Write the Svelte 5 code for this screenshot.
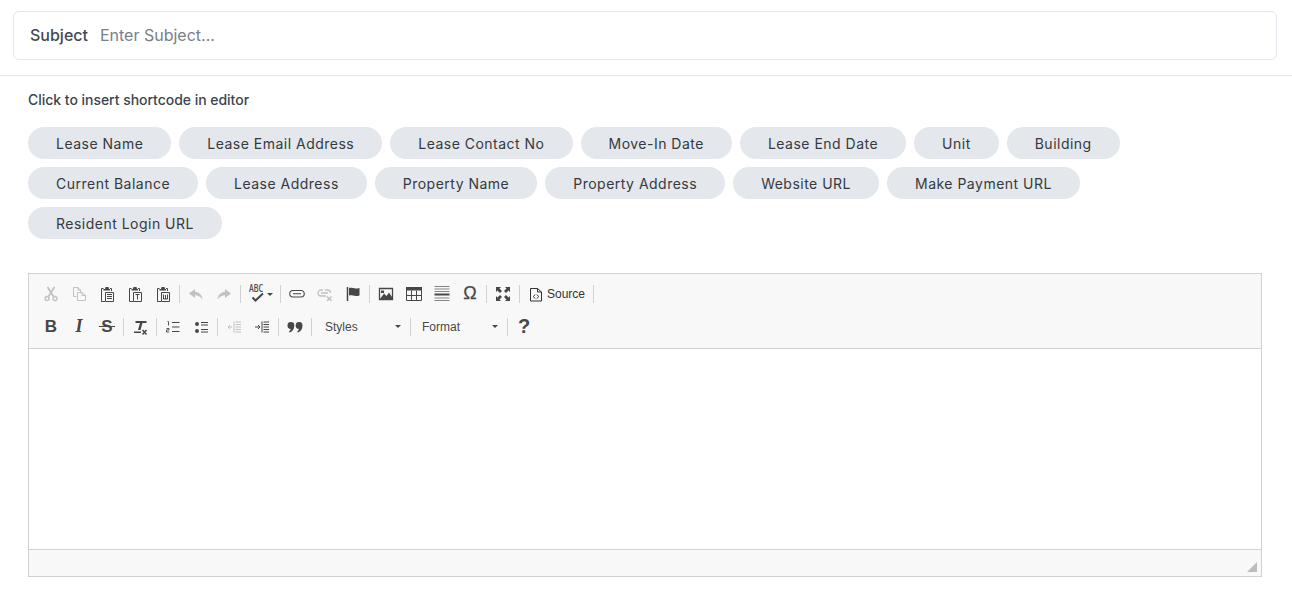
<script>
  const labels = ['Lease Name','Lease Email Address','Lease Contact No','Move-In Date','Lease End Date','Unit','Building','Current Balance','Lease Address','Property Name','Property Address','Website URL','Make Payment URL','Resident Login URL'];
  const S = (d, w = 1, o = 1) => ({ d, s: w, o });
  const F = (d) => ({ d, o: 1 });
  const clip = [S('M4.5 2.500H2.500V15.500H6'), S('M11 2.500H12.500V5'), F('M4.500 3H6L6.500 1H9.500L10 3H11V4.500H4.500Z')];
  const doc = S('M6.500 6.500H14.500V15.500H6.500Z');
  const icons = {
    cut: [S('M4.500 1 10.500 10.500M11.500 1 5.500 10.500', 1.8), S('M4 10.500a2 2 0 1 0 .1 0ZM12 10.500a2 2 0 1 0 .1 0Z', 1.5)],
    copy: [S('M5.500 10.500H2.500V1.500H7L9.500 4V6M7 1.500V4H9.500M6.500 6.500H11L14.500 9.500V14.500H6.500ZM11 6.500V9.500H14.500')],
    paste: [...clip, doc, S('M8 8.500H13M8 10.500H13M8 12.500H13')],
    pasteT: [...clip, doc, S('M8.500 8.500H12.500M10.500 8.500V13.500')],
    pasteW: [...clip, doc, S('M8.500 8.500V13H12.500V8.500M10.500 9V13')],
    undo: [F('M7 3 1 7.500 7 12V9.300C10 9.300 12 10.300 14.500 13.500 14 8.500 11 6 7 5.700Z')],
    redo: [F('M9 3 15 7.500 9 12V9.300C6 9.300 4 10.300 1.500 13.500 2 8.500 5 6 9 5.700Z')],
    link: [S('M6 4.500H4a3 3 0 0 0 0 6.500H12a3 3 0 0 0 0-6.500H5M4 7.750H12', 1.1)],
    unlink: [S('M6 4H4a3 3 0 0 0 0 6H9M4 7H11M8 4H10.500a3 3 0 0 1 3 3', 1.300), S('M10 10.500 14.500 15M14.500 10.500 10 15', 1.500)],
    flag: [S('M2.500 1V15', 1.500), F('M4 2C7 1 9 3.500 14.500 2V9.500C9 11 7 8.500 4 9.500Z')],
    image: [S('M1.500 2.500H14.500V13.500H1.500Z', 1.300), F('M2 13 6 7.500 8.500 10 11 6.500 14 11V13ZM3 4.500H6V7H3Z')],
    table: [F('M0 1H16V4.500H0Z'), S('M.5 1.500H15.500V14.500H.5ZM.5 9.500H15.500M5.500 4.500V14.500M10.500 4.500V14.500', 1)],
    hr: [S('M.5 .5H15.500M.5 3H15.500M.5 5.500H15.500M.5 12H15.500M.5 14.500H15.500', 1, .65), S('M.5 8.500H15.500', 2)],
    fit: [F('M1 1H6L4.500 2.500 7 5 5 7 2.500 4.500 1 6ZM15 1V6L13.500 4.500 11 7 9 5 11.500 2.500 10 1ZM1 15V10L2.500 11.500 5 9 7 11 4.500 13.500 6 15ZM15 15H10L11.500 13.500 9 11 11 9 13.500 11.500 15 10Z')],
    source: [S('M2.500 2.500H9.500L13.500 6V15H2.500ZM9.500 2.500V6H13.500', 1), S('M7 8.500 5.500 10.500 7 12.500M9 8.500 10.500 10.500 9 12.500', 1)],
    ol: [S('M7 3.500H14.500M7 8H14.500M7 12.500H14.500', 1.100), S('M2.500 2.500H3.500V6.500M1.500 9.500H4V11H1.500V13H4.300', .9)],
    ul: [S('M8 3.500H15M8 6H15M8 10.500H15M8 13H15', 1), F('M2 5a2 2 0 1 0 4 0a2 2 0 1 0-4 0ZM2 12a2 2 0 1 0 4 0a2 2 0 1 0-4 0Z')],
    outdent: [S('M8 2.500V13.500', 1), S('M9.500 3H15M9.500 5.500H15M9.500 8H15M9.500 10.500H15M9.500 13H15', 1), S('M2 8H6', 1), S('M4 6 2 8 4 10', 1)],
    indent: [S('M8 2.500V13.500', 1), S('M9.500 3H15M9.500 5.500H15M9.500 8H15M9.500 10.500H15M9.500 13H15', 1), S('M1 8H6', 1), S('M4 6 6 8 4 10', 1)],
    quote: [F('M.5 6.500a3.400 3.400 0 0 1 6.800 0C7.300 10 5.500 12.500 2.700 13.500L2 12.400C3 11.700 3.600 11 3.800 10A3.400 3.400 0 0 1 .5 6.500ZM8.700 6.500a3.400 3.400 0 0 1 6.800 0C15.500 10 13.700 12.500 10.900 13.500L10.200 12.400C11.200 11.700 11.800 11 12 10A3.400 3.400 0 0 1 8.700 6.500Z')],
    clear: [F('M3.500 2H14.500V4H10.500L8.500 11H6L8 4H3.500ZM2 12.500H9V14H2Z'), S('M10.500 11 14.500 15.500M14.500 11 10.500 15.500', 1.500)],
    check: [S('M3.500 10.500 6.500 13.500 14 6.500', 2)]
  };
</script>

{#snippet svg(name, off = false)}
  <svg class="ico" class:off width="16" height="16" viewBox="0 0 16 16" aria-hidden="true">
    {#each icons[name] as p}
      {#if p.s}
        <path d={p.d} fill="none" stroke="currentColor" stroke-width={p.s} opacity={p.o} />
      {:else}
        <path d={p.d} fill="currentColor" />
      {/if}
    {/each}
  </svg>
{/snippet}
{#snippet btn(name, off = false)}
  <span class="btn">{@render svg(name, off)}</span>
{/snippet}

<main class="page">
  <div class="subject-wrap">
    <div class="subject">
      <span class="subject-label">Subject</span>
      <span class="placeholder">Enter Subject...</span>
    </div>
  </div>
  <hr class="divider" />
  <section class="body">
    <p class="hint">Click to insert shortcode in editor</p>
    <div class="pills">
      {#each labels as label}
        <span class="pill">{label}</span>
      {/each}
    </div>
    <div class="editor">
      <div class="toolbar">
        <div class="tbrow">
          {@render btn('cut', true)}{@render btn('copy', true)}{@render btn('paste')}{@render btn('pasteT')}{@render btn('pasteW')}
          <i class="sep"></i>
          {@render btn('undo', true)}{@render btn('redo', true)}
          <i class="sep"></i>
          <span class="btn spell">
            <span class="abc">ABC</span>
            <span class="check">{@render svg('check')}</span>
            <i class="caret"></i>
          </span>
          <i class="sep"></i>
          {@render btn('link')}{@render btn('unlink', true)}{@render btn('flag')}
          <i class="sep"></i>
          {@render btn('image')}{@render btn('table')}{@render btn('hr')}
          <span class="btn omega">Ω</span>
          <i class="sep"></i>
          {@render btn('fit')}
          <i class="sep"></i>
          <span class="btn src">{@render svg('source')}<span>Source</span></span>
          <i class="sep"></i>
        </div>
        <div class="tbrow">
          <span class="btn glyph b">B</span><span class="btn glyph i">I</span><span class="btn glyph st">S</span>
          <i class="sep"></i>
          {@render btn('clear')}
          <i class="sep"></i>
          {@render btn('ol')}{@render btn('ul')}
          <i class="sep"></i>
          {@render btn('outdent', true)}{@render btn('indent')}
          <i class="sep"></i>
          {@render btn('quote')}
          <i class="sep"></i>
          <span class="combo styles">Styles<i class="caret"></i></span>
          <i class="sep"></i>
          <span class="combo format">Format<i class="caret"></i></span>
          <i class="sep"></i>
          <span class="btn glyph help">?</span>
        </div>
      </div>
      <div class="content"></div>
      <div class="bottom"><i class="resize"></i></div>
    </div>
  </section>
</main>

<style>
  :global(body) { margin: 0; background: #fff; }
  .page { font-family: Inter, "Liberation Sans", sans-serif; color: #343a40; }
  .subject-wrap { padding: 11px 15px 15px 13px; }
  .subject {
    height: 47px; box-sizing: content-box; border: 1px solid #e4e7ee; border-radius: 6px;
    display: flex; align-items: center; padding: 0 16px; gap: 12px; font-size: 16px; line-height: 45px;
  }
  .subject-label { font-weight: 500; color: #3f4a56; }
  .placeholder { color: #78808a; }
  .divider { margin: 0; border: 0; border-top: 1px solid #e4e5ee; }
  .body { padding: 0 30px 0 28px; }
  .hint { margin: 15px 0 0; font-size: 14px; line-height: 17px; font-weight: 500; color: #3b444e; letter-spacing: -0.03px; }
  .pills { display: flex; flex-wrap: wrap; gap: 8px; margin-top: 19px; }
  .pill {
    height: 32px; line-height: 33px; padding: 0 28px; border-radius: 16px; background: #e4e7eb;
    font-size: 14px; letter-spacing: 0.49px; color: #343a40; white-space: nowrap;
  }
  .editor { margin-top: 34px; border: 1px solid #d1d1d1; font-family: "Liberation Sans", Arial, sans-serif; }
  .toolbar { height: 71px; background: #f8f8f8; border-bottom: 1px solid #d1d1d1; padding: 3px 0 0 8px; }
  .tbrow { display: flex; align-items: center; height: 33px; color: #474747; }
  .btn { width: 28px; height: 24px; display: flex; align-items: center; justify-content: center; flex: none; }
  .ico.off { opacity: 0.3; }
  .sep { width: 1px; height: 18px; background: #d1d1d1; margin: 0 2px; flex: none; }
  .spell { width: 35px; position: relative; }
  .abc { position: absolute; left: 6px; top: 1px; font-size: 10px; line-height: 11px; font-family: "DejaVu Sans Mono", monospace; transform: scaleX(.78); transform-origin: left; -webkit-text-stroke: .2px currentColor; }
  .check { position: absolute; left: 6px; top: 5px; display: block; height: 16px; }
  .spell .caret { position: absolute; left: 24px; top: 11px; }
  .caret { display: block; width: 0; height: 0; border: 3px solid transparent; border-top-color: #474747; border-bottom: 0; }
  .omega { font-family: "Liberation Sans", sans-serif; font-size: 18px; -webkit-text-stroke: .25px currentColor; }
  .src { width: 69px; padding-left: 6px; box-sizing: border-box; justify-content: flex-start; gap: 3px; font-size: 12px; color: #333; }
  .glyph { font-size: 16px; }
  .b { font-weight: 700; font-size: 17px; }
  .i { font-family: "Liberation Serif", serif; font-style: italic; font-weight: 700; font-size: 18px; }
  .st { font-weight: 700; font-size: 17px; position: relative; }
  .st::after { content: ""; position: absolute; left: 6px; right: 6px; top: 11px; height: 1px; background: currentColor; }
  .help { font-size: 20px; font-weight: 700; }
  .combo { display: flex; align-items: center; justify-content: space-between; font-size: 12px; color: #484848; flex: none; box-sizing: border-box; }
  .styles { width: 94px; padding: 0 7px 0 11px; }
  .format { width: 92px; padding: 0 7px 0 9px; }
  .content { height: 200px; background: #fff; }
  .bottom { height: 26px; background: #f8f8f8; border-top: 1px solid #d1d1d1; display: flex; justify-content: flex-end; align-items: flex-end; }
  .resize { width: 0; height: 0; border-style: solid; border-width: 0 0 10px 10px; border-color: transparent transparent #bdbdbd transparent; margin: 0 4px 4px 0; }
</style>
